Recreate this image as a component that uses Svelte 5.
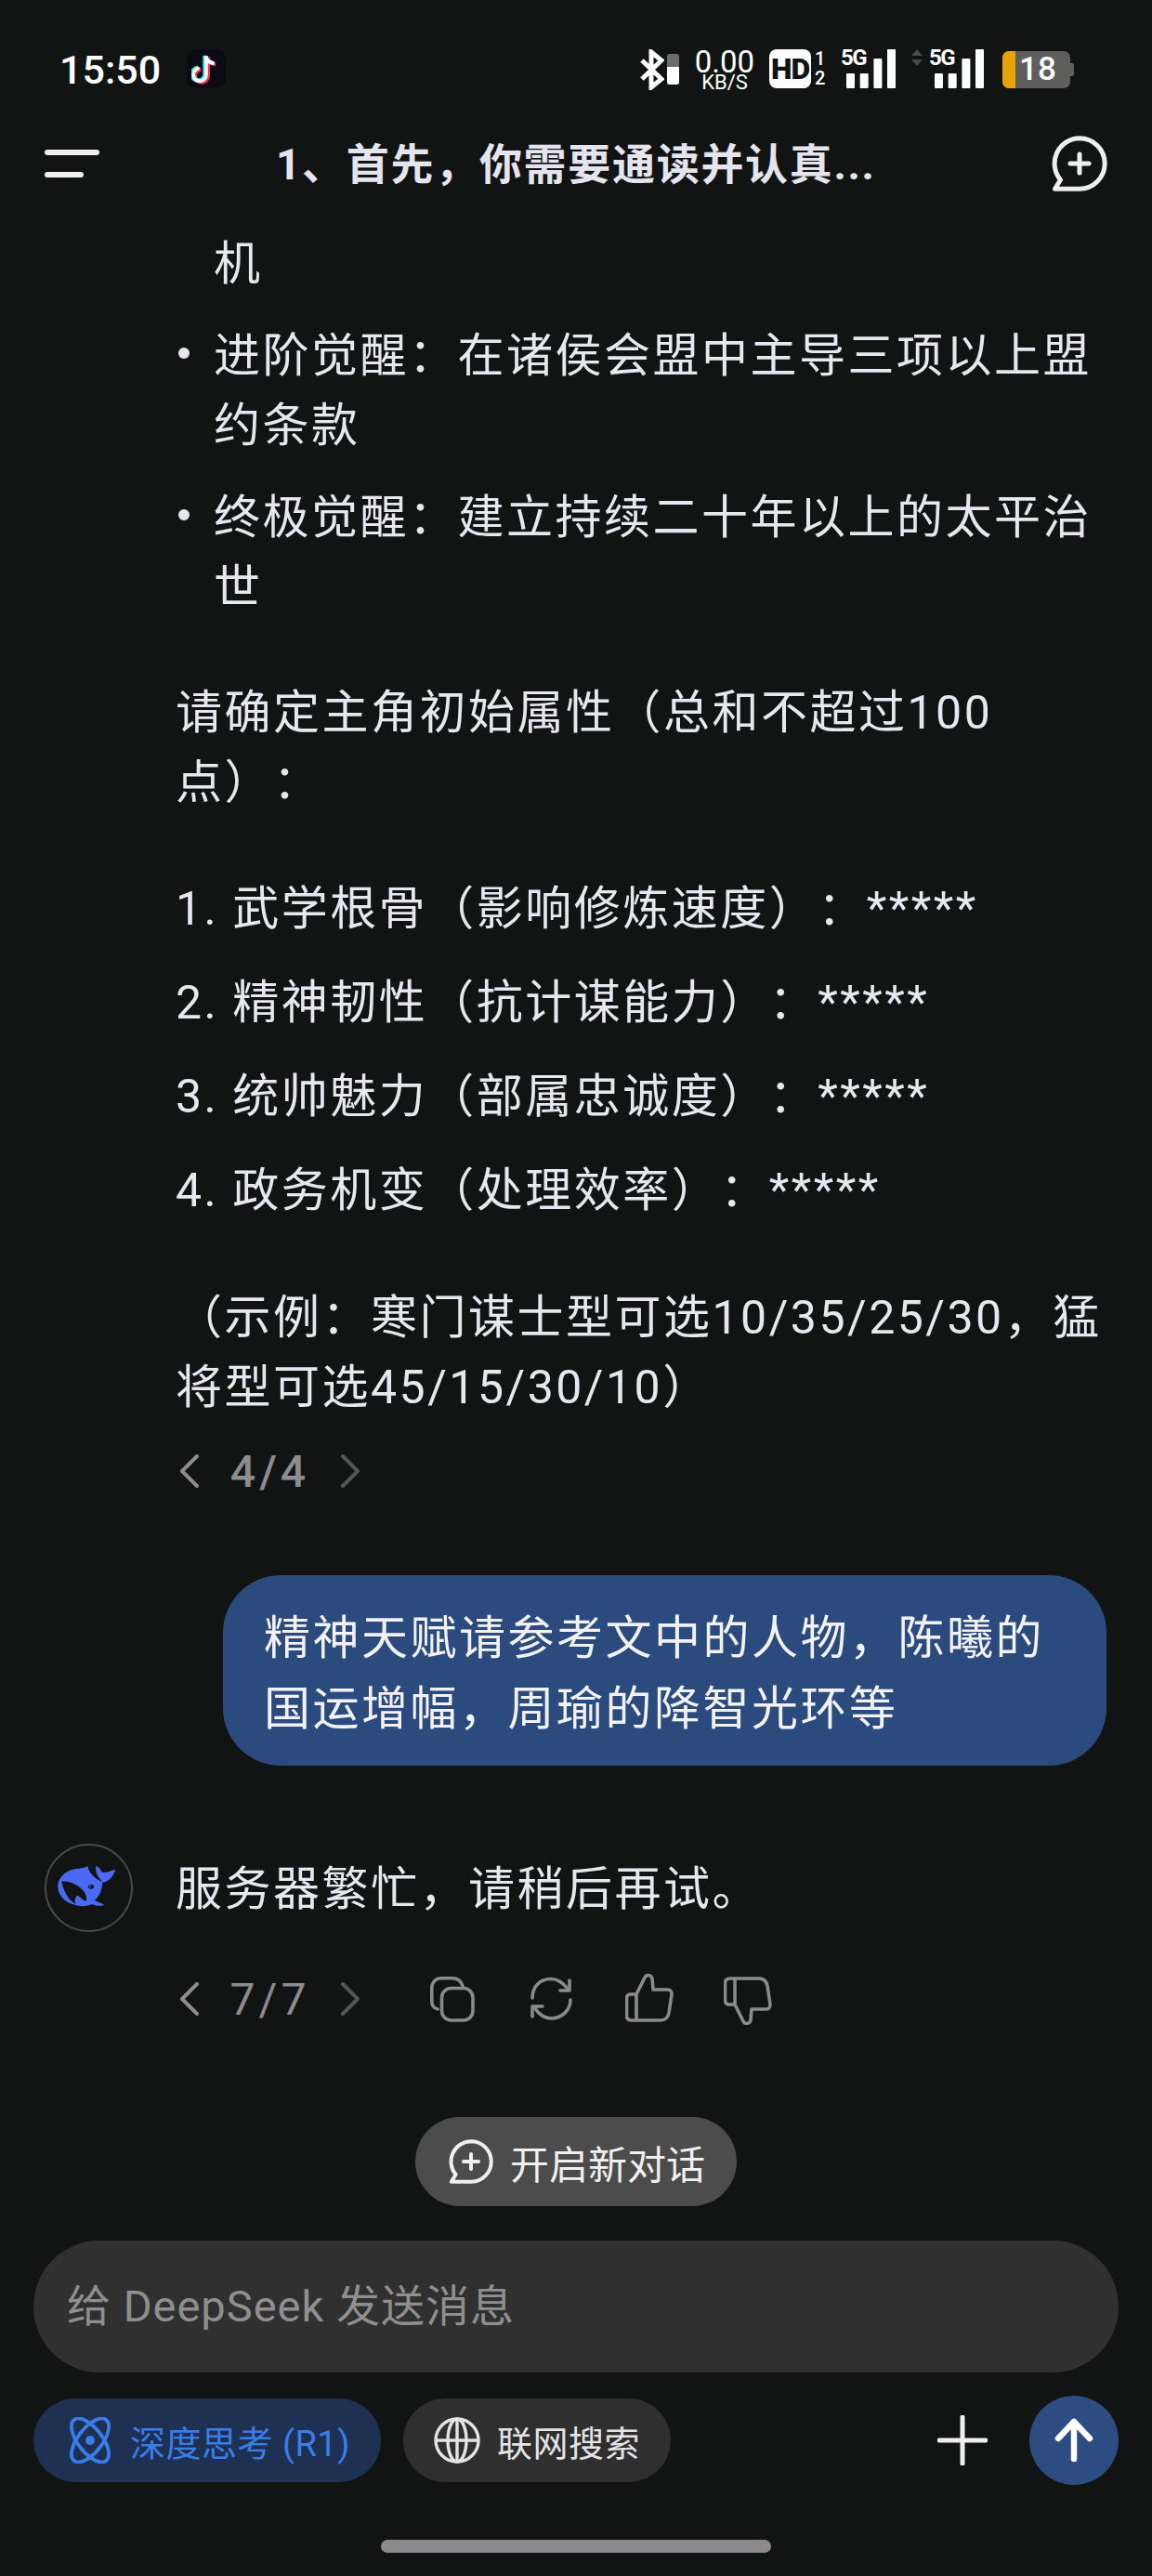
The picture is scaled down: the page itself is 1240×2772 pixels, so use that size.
<script>
  const stats = [
    { name: "武学根骨（影响修炼速度）：", stars: "*****" },
    { name: "精神韧性（抗计谋能力）：", stars: "*****" },
    { name: "统帅魅力（部属忠诚度）：", stars: "*****" },
    { name: "政务机变（处理效率）：", stars: "*****" },
  ];

  const thumb =
    "M12 22L21 4C23 0 28 1 29 5L30 17H46C49 17 50 20 50 22L47 42C46 47 43 50 38 50H7C3 50 1.500 48 1.500 45V27C1.500 24 3 22 6 22H12V50";
</script>

{#snippet chatPlus(size, width)}
  <svg viewBox="0 0 60 60" width={size} height={size} fill="none" stroke="currentColor" stroke-width={width} stroke-linecap="round" stroke-linejoin="round">
    <path d="M30 2.800A27.200 27.200 0 0 1 30 57.200H3.500L9.500 47.500A27.200 27.200 0 0 1 30 2.800Z" />
    <path d="M30 20V40M20 30H40" />
  </svg>
{/snippet}

{#snippet chevron(dir, dim)}
  <svg class="chev" class:dim viewBox="0 0 22 36" width="22" height="36" fill="none" stroke="currentColor" stroke-width="4" stroke-linecap="round" stroke-linejoin="round">
    <path d={dir === "left" ? "M19 2L3 18L19 34" : "M3 2L19 18L3 34"} />
  </svg>
{/snippet}

{#snippet signal()}
  <div class="signal">
    <span class="five">5G</span>
    <svg viewBox="0 0 53 42" width="53" height="42" fill="#fff">
      <rect x="0" y="26" width="9" height="16" rx="1" />
      <rect x="14.700" y="26" width="9" height="16" rx="1" />
      <rect x="29.400" y="10" width="9" height="32" rx="1" />
      <rect x="44" y="0" width="9" height="42" rx="1" />
    </svg>
  </div>
{/snippet}

<div class="page">
  <header class="status">
    <span class="time">15:50</span>
    <div class="tiktok">
      <svg viewBox="0 0 30 32" width="32" height="34" fill="none">
        <g stroke-width="4.500">
          <path d="M15 3V22A6.500 6.500 0 1 1 8 15.500M15 3C15 7 18 10 23 10.500" stroke="#ff2c55" transform="translate(1.500 1)" />
          <path d="M15 3V22A6.500 6.500 0 1 1 8 15.500M15 3C15 7 18 10 23 10.500" stroke="#3ee8e8" transform="translate(-1.200 -.5)" />
          <path d="M15 3V22A6.500 6.500 0 1 1 8 15.500M15 3C15 7 18 10 23 10.500" stroke="#fff" stroke-width="3.400" />
        </g>
      </svg>
    </div>
    <div class="status-right">
      <svg viewBox="0 0 26 44" width="26" height="44" fill="none" stroke="#fff" stroke-width="5" stroke-linejoin="miter">
        <path d="M2 12L23 32L12 41V3L23 12L2 32" />
      </svg>
      <div class="mini-batt"><span></span></div>
      <div class="speed">
        <span class="speed-num">0.00</span>
        <span class="speed-unit">KB/S</span>
      </div>
      <span class="hd">HD</span>
      <div class="sims"><span>1</span><span>2</span></div>
      {@render signal()}
      <svg class="updown" viewBox="0 0 12 18" width="12" height="18" fill="#4a4a4a">
        <path d="M6 0L12 7H0ZM6 18L0 11H12Z" />
      </svg>
      {@render signal()}
      <div class="battery">
        <span class="level"></span>
        <span class="pct">18</span>
      </div>
      <span class="batt-cap"></span>
    </div>
  </header>

  <nav class="topbar">
    <div class="burger"><span></span><span></span></div>
    <h1>1、首先，你需要通读并认真...</h1>
    <div class="new-chat">{@render chatPlus(60, 5)}</div>
  </nav>

  <main class="chat">
    <ul>
      <li class="cont">机</li>
      <li>进阶觉醒：在诸侯会盟中主导三项以上盟<br />约条款</li>
      <li>终极觉醒：建立持续二十年以上的太平治<br />世</li>
    </ul>

    <p class="ask">请确定主角初始属性（总和不超过100<br />点）：</p>

    <ol>
      {#each stats as stat, i}
        <li>{i + 1}. {stat.name}{stat.stars}</li>
      {/each}
    </ol>

    <p class="sample">（示例：寒门谋士型可选10/35/25/30，猛<br />将型可选45/15/30/10）</p>

    <div class="pager first">
      {@render chevron("left", false)}
      <span class="count bold">4/4</span>
      {@render chevron("right", true)}
    </div>

    <div class="user-row">
      <div class="bubble">精神天赋请参考文中的人物，陈曦的<br />国运增幅，周瑜的降智光环等</div>
    </div>

    <div class="bot-row">
      <div class="avatar">
        <svg viewBox="8 5 252 192" width="84" height="64" fill="#4a6af5">
          <path d="M33 90C36 60 66 38 100 37C112 36 122 33 130 30C130 42 140 58 160 72C166 76 172 78 177 80C176 104 168 126 152 140C160 146 172 148 182 154C168 160 154 158 144 152C130 158 114 160 100 157C60 152 30 124 33 90Z" />
          <path d="M156 28C168 34 172 42 176 50C188 50 202 46 218 40C214 60 200 78 178 82C170 72 152 56 156 28Z" />
          <path fill="#111413" d="M44 78C70 78 98 88 116 110C124 120 128 132 124 142C112 140 106 128 96 124C88 132 84 144 92 152C66 140 52 110 44 78Z" />
          <ellipse cx="140" cy="96" rx="9" ry="7" fill="#111413" />
          <circle cx="137" cy="94" r="3" />
        </svg>
      </div>
      <p>服务器繁忙，请稍后再试。</p>
    </div>

    <div class="pager second">
      {@render chevron("left", false)}
      <span class="count">7/7</span>
      {@render chevron("right", true)}
      <div class="actions">
        <svg class="copy" viewBox="0 0 48 49" width="48" height="49" fill="none" stroke="currentColor" stroke-width="3.600" stroke-linejoin="round" stroke-linecap="round">
          <path d="M8 35C3.500 34 1.800 30 1.800 27V12C1.800 6 6 1.800 12 1.800H24C29 1.800 33 4 35 10" />
          <rect x="12.500" y="12.500" width="33.500" height="34.500" rx="10" />
        </svg>
        <svg class="refresh" viewBox="0 0 46 48" width="46" height="48" fill="none" stroke="currentColor" stroke-width="3.600" stroke-linejoin="round" stroke-linecap="round">
          <path d="M3 23C3 11 11 2.500 23 2.500C31 2.500 37 8 41 13" />
          <path d="M43 4V15H33" />
          <path d="M44 25C44 36 35 45 23 45C15 45 9 39 5 33" />
          <path d="M3 43V32H14" />
        </svg>
        <svg class="up" viewBox="0 0 52 52" width="52" height="52" fill="none" stroke="currentColor" stroke-width="3.600" stroke-linejoin="round" stroke-linecap="round">
          <path d={thumb} />
        </svg>
        <svg class="down" viewBox="0 0 52 52" width="52" height="52" fill="none" stroke="currentColor" stroke-width="3.600" stroke-linejoin="round" stroke-linecap="round">
          <path d={thumb} transform="translate(0 52) scale(1 -1)" />
        </svg>
      </div>
    </div>
  </main>

  <div class="new-topic">
    <div class="pill">{@render chatPlus(48, 5)}<span>开启新对话</span></div>
  </div>

  <div class="input">给 DeepSeek 发送消息</div>

  <div class="tools">
    <div class="chip blue">
      <svg viewBox="0 0 50 50" width="50" height="50" fill="none" stroke="currentColor" stroke-width="3.800">
        <ellipse cx="25" cy="25" rx="13" ry="28" transform="rotate(-38 25 25)" />
        <ellipse cx="25" cy="25" rx="13" ry="28" transform="rotate(38 25 25)" />
        <circle cx="25" cy="25" r="5" fill="currentColor" stroke="none" />
      </svg>
      <span>深度思考 (R1)</span>
    </div>
    <div class="chip grey">
      <svg viewBox="0 0 50 50" width="50" height="50" fill="none" stroke="currentColor" stroke-width="3.400">
        <circle cx="25" cy="25" r="23" />
        <ellipse cx="25" cy="25" rx="10" ry="23" />
        <path d="M2 25H48M25 2V48" />
      </svg>
      <span>联网搜索</span>
    </div>
    <svg class="plus" viewBox="0 0 54 54" width="54" height="54" fill="none" stroke="#efefef" stroke-width="5" stroke-linecap="round">
      <path d="M27 2V52M2 27H52" />
    </svg>
    <div class="send">
      <svg viewBox="0 0 42 48" width="42" height="48" fill="none" stroke="#fff" stroke-width="6.500" stroke-linecap="round" stroke-linejoin="round">
        <path d="M21 44V4M4 22L21 4L38 22" />
      </svg>
    </div>
  </div>

  <div class="home"><span></span></div>
</div>

<style>
  :global(body) {
    margin: 0;
    background: #111413;
  }

  .page {
    width: 1240px;
    height: 2772px;
    overflow: hidden;
    display: flex;
    flex-direction: column;
    background: #111413;
    color: #e8e6ee;
    font-family: Roboto, "Noto Sans CJK SC", sans-serif;
    font-weight: 400;
    text-spacing-trim: space-all;
  }

  .status {
    height: 146px;
    flex: none;
    box-sizing: border-box;
    padding: 53px 84px 0 64px;
    display: flex;
    align-items: flex-start;
    color: #fff;
  }

  .time {
    font-size: 43px;
    line-height: 44px;
    font-weight: 500;
    width: 137px;
  }

  .tiktok {
    width: 42px;
    height: 42px;
    border-radius: 10px;
    background: #0b0b14;
    display: flex;
    align-items: center;
    justify-content: center;
  }

  .status-right {
    margin-left: auto;
    display: flex;
    align-items: flex-start;
  }

  .mini-batt {
    width: 13px;
    height: 33px;
    margin: 5px 0 0 3px;
    border-radius: 3px;
    background: #6d6d6d;
    display: flex;
    align-items: flex-end;
  }

  .mini-batt span {
    width: 100%;
    height: 19px;
    background: #fff;
    border-radius: 0 0 3px 3px;
  }

  .speed {
    margin-left: 14px;
    width: 70px;
    display: flex;
    flex-direction: column;
    align-items: center;
  }

  .speed-num {
    font-size: 33px;
    line-height: 27px;
  }

  .speed-unit {
    font-size: 22px;
    line-height: 17px;
  }

  .hd {
    margin-left: 13px;
    width: 45px;
    height: 42px;
    background: #fff;
    border-radius: 8px;
    color: #111413;
    font-size: 32px;
    line-height: 42px;
    font-weight: 900;
    text-align: center;
    letter-spacing: -1px;
  }

  .sims {
    margin-left: 4px;
    width: 10px;
    display: flex;
    flex-direction: column;
    font-size: 20px;
    line-height: 21px;
    font-weight: 500;
  }

  .signal {
    position: relative;
    width: 53px;
    height: 42px;
    margin-left: 24px;
  }

  .five {
    position: absolute;
    left: -6px;
    top: -3px;
    font-size: 24px;
    line-height: 24px;
    font-weight: 700;
    letter-spacing: -1.500px;
  }

  .updown {
    margin: 0 -11px 0 17px;
  }

  .battery {
    position: relative;
    width: 73px;
    height: 40px;
    margin: 2px 0 0 20px;
    border-radius: 7px;
    background: #5e5e5c;
    overflow: hidden;
  }

  .batt-cap {
    width: 4px;
    height: 14px;
    margin-top: 15px;
    background: #5e5e5c;
    border-radius: 0 2px 2px 0;
  }

  .level {
    position: absolute;
    left: 0;
    top: 0;
    bottom: 0;
    width: 14px;
    background: #e6a409;
  }

  .pct {
    position: absolute;
    left: 18px;
    top: 0;
    font-size: 35px;
    line-height: 40px;
    font-weight: 500;
  }

  .topbar {
    height: 74px;
    flex: none;
    display: flex;
    align-items: flex-start;
    position: relative;
    padding: 0 48px;
  }

  .burger {
    width: 59px;
    margin-top: 15px;
    display: flex;
    flex-direction: column;
    gap: 18px;
  }

  .burger span {
    height: 6px;
    border-radius: 3px;
    background: #efefef;
  }

  .burger span:last-child {
    width: 42px;
  }

  h1 {
    margin: 0 0 0 190px;
    font-size: 46px;
    line-height: 62px;
    font-weight: 700;
    letter-spacing: 1.700px;
    color: #e6e4ee;
    white-space: nowrap;
  }

  .new-chat {
    margin-left: auto;
    color: #efefef;
    display: flex;
  }

  .chat {
    flex: none;
    height: 2018px;
    padding: 27px 0 0 189px;
    font-size: 50px;
    line-height: 75px;
    letter-spacing: 2.500px;
  }

  ul,
  ol,
  p {
    margin: 0;
    padding: 0;
    list-style: none;
  }

  ul li {
    position: relative;
    padding-left: 41px;
    margin-bottom: 24px;
  }

  ul li:last-child {
    margin-bottom: 0;
  }

  ul li:not(.cont)::before {
    content: "";
    position: absolute;
    left: 3px;
    top: 28px;
    width: 12px;
    height: 12px;
    border-radius: 50%;
    background: #e8e6ee;
  }

  .ask {
    margin-top: 60px;
  }

  ol {
    margin-top: 61px;
    display: flex;
    flex-direction: column;
    gap: 26px;
  }

  .sample {
    margin-top: 62px;
  }

  .pager {
    display: flex;
    align-items: center;
    color: #8e8c8f;
    height: 60px;
    margin-left: 4px;
  }

  .pager.first {
    margin-top: 22px;
  }

  .pager.second {
    margin-top: 42px;
  }

  .chev {
    flex: none;
  }

  .chev.dim {
    color: #555;
  }

  .count {
    width: 151px;
    text-align: center;
    font-size: 48px;
    letter-spacing: 4px;
  }

  .count.bold {
    font-weight: 500;
  }

  .actions {
    margin-left: 75px;
    display: flex;
    align-items: center;
    color: #8b8b8b;
  }

  .refresh {
    margin-left: 59px;
  }

  .up {
    margin-left: 57px;
    margin-top: -2px;
  }

  .down {
    margin-left: 54px;
    margin-top: 4px;
  }

  .user-row {
    margin: 82px 49px 0 0;
    display: flex;
    justify-content: flex-end;
  }

  .bubble {
    width: 951px;
    box-sizing: border-box;
    padding: 30px 0 23px 44px;
    border-radius: 62px;
    background: #2b4a7e;
    line-height: 76px;
    color: #f2f2f5;
  }

  .bot-row {
    margin: 84px 0 0 -141px;
    display: flex;
    align-items: flex-start;
  }

  .avatar {
    width: 95px;
    height: 95px;
    flex: none;
    box-sizing: border-box;
    border: 2px solid #4a4a4a;
    border-radius: 50%;
    display: flex;
    align-items: center;
    justify-content: center;
    margin-right: 46px;
  }

  .bot-row p {
    margin-top: 12px;
  }

  .new-topic {
    flex: none;
    height: 96px;
    margin-top: 13px;
    display: flex;
    justify-content: center;
  }

  .pill {
    width: 346px;
    height: 96px;
    box-sizing: border-box;
    padding-left: 36px;
    display: flex;
    align-items: center;
    gap: 18px;
    border-radius: 48px;
    background: #4c4c4c;
    color: #f0f0f0;
    font-size: 42px;
  }

  .input {
    flex: none;
    height: 142px;
    margin: 37px 36px 0;
    padding-left: 36px;
    border-radius: 71px;
    background: #303030;
    color: #8f8f8f;
    font-size: 47px;
    line-height: 142px;
    letter-spacing: 1px;
  }

  .tools {
    flex: none;
    height: 90px;
    margin-top: 28px;
    padding: 0 36px;
    display: flex;
    align-items: center;
  }

  .chip {
    height: 90px;
    box-sizing: border-box;
    border-radius: 45px;
    display: flex;
    align-items: center;
    gap: 18px;
    font-size: 38px;
    letter-spacing: .5px;
  }

  .blue {
    width: 374px;
    padding-left: 36px;
    background: #1f3152;
    color: #3b7de8;
  }

  .grey {
    width: 288px;
    margin-left: 24px;
    padding-left: 33px;
    background: #2f2f2f;
    color: #e4e4e4;
  }

  .plus {
    margin-left: auto;
  }

  .send {
    width: 96px;
    height: 96px;
    margin-left: 45px;
    border-radius: 50%;
    background: #2c4c82;
    display: flex;
    align-items: center;
    justify-content: center;
  }

  .home {
    flex: none;
    margin-top: 62px;
    display: flex;
    justify-content: center;
  }

  .home span {
    width: 420px;
    height: 14px;
    border-radius: 7px;
    background: #8b898b;
  }
</style>
